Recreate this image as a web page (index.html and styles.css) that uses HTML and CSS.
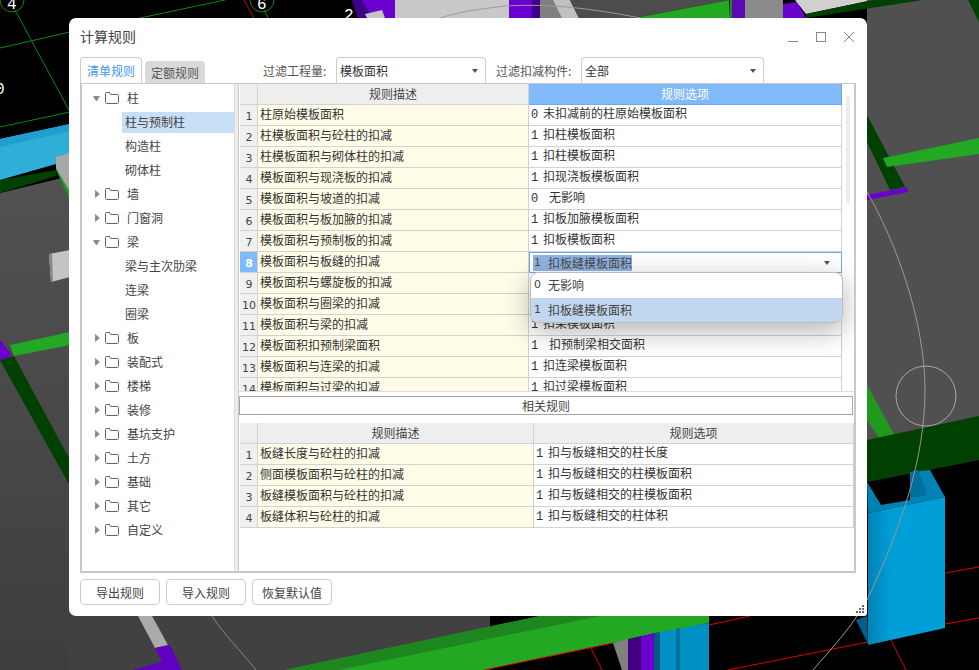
FILE: index.html
```html
<!DOCTYPE html>
<html lang="zh-CN">
<head>
<meta charset="utf-8">
<title>计算规则</title>
<link rel="stylesheet" href="styles.css">
</head>
<body>
<div class="desktop">
<svg class="scene" viewBox="0 0 979 670" width="979" height="670" xmlns="http://www.w3.org/2000/svg">
  <defs>
    <linearGradient id="floor" x1="0" y1="0" x2="0" y2="1"><stop offset="0" stop-color="#525252"/><stop offset="1" stop-color="#3e3e3e"/></linearGradient>
    <linearGradient id="col" x1="0" y1="0" x2="1" y2="0"><stop offset="0" stop-color="#0082b8"/><stop offset=".3" stop-color="#009fd8"/><stop offset="1" stop-color="#009fd8"/></linearGradient>
  </defs>
  <rect width="979" height="670" fill="#000"/>
  <polygon points="0,193 70,176 70,670 0,670" fill="url(#floor)"/>
  <rect x="70" y="600" width="420" height="70" fill="#414141"/>
  <polygon points="0,139 70,124 70,160 0,180" fill="#2fafd8"/>
  <polygon points="0,139 70,124 70,131 0,147" fill="#1f9fcf"/>
  <polygon points="0,180 56,170 56,176 0,193" fill="#004000"/>
  <polygon points="56,170 70,200 70,180 56,168" fill="#1f9a1f"/>
  <polygon points="56,157 70,153 70,192 56,168" fill="#a8a8a8"/>
  <polygon points="49,254 70,250 70,277 51,282" fill="#c4c4c4"/>
  <polygon points="49,254 52,254 53,281 51,282" fill="#888"/>
  <line x1="0" y1="48" x2="70" y2="32" stroke="#0c8a0c"/>
  <line x1="0" y1="127" x2="70" y2="112" stroke="#0c8a0c"/>
  <line x1="15" y1="10" x2="70" y2="112" stroke="#0c8a0c"/>
  <line x1="140" y1="18" x2="225" y2="0" stroke="#0c8a0c"/>
  <line x1="244" y1="0" x2="254" y2="18" stroke="#d00000"/>
  <line x1="268" y1="18" x2="264" y2="10" stroke="#0c8a0c"/>
  <circle cx="12" cy="0" r="12" fill="none" stroke="#0c8a0c"/>
  <circle cx="262" cy="0" r="12" fill="none" stroke="#0c8a0c"/>
  <text class="scene-num" x="7" y="9">4</text>
  <text class="scene-num" x="257" y="9">6</text>
  <text class="scene-num" x="344" y="20">2</text>
  <text class="scene-num" x="-5" y="94">0</text>

  <polygon points="352,0 365,0 395,0 395,18 365,18 358,18" fill="#6a00d0"/>
  <polygon points="352,0 362,0 372,18 358,18" fill="#40008a"/>
  <polygon points="365,14 382,10 385,18 367,18" fill="#c4c4c4"/>
  <rect x="395" y="0" width="114" height="18" fill="#c8c8c8"/>
  <rect x="509" y="0" width="23" height="18" fill="#6a00d0"/>
  <rect x="532" y="0" width="8" height="18" fill="#40008a"/>
  <rect x="540" y="0" width="30" height="18" fill="#808080"/>
  <polygon points="553,0 570,0 579,18 562,18" fill="#c0c0c0"/>
  <polygon points="570,0 729,0 635,18 579,18" fill="#4c4c4c"/>
  <polygon points="635,18 729,0 730,18" fill="#22a822"/>
  <path d="M440 18 C465 10 490 8 505 6 C540 4 580 6 640 18" fill="none" stroke="#9a9a9a"/>
  <rect x="730" y="0" width="2" height="18" fill="#1f8a1f"/>
  <rect x="732" y="0" width="13" height="18" fill="#5a0ab0"/>
  <rect x="745" y="0" width="38" height="18" fill="#8a8a8a"/>
  <polygon points="783,4 797,2 806,18 783,18" fill="#6a00cc"/>
  <polygon points="795,0 873,0 806,14" fill="#d0d0d0"/>
  <polygon points="867,0 979,0 979,500 867,500" fill="#505050"/>
  <polygon points="806,14 873,0 923,0 806,18" fill="#004000"/>
  <polygon points="968,0 979,0 979,22" fill="#004000"/>
  <polygon points="867,115 905,187 890,190 867,142" fill="#004000"/>
  <polygon points="883,158 979,138 979,154 887,167" fill="#22a822"/>
  <polygon points="867,195 907,187 908,192 867,200" fill="#6a00cc"/>
  <polygon points="867,385 896,438 881,441 867,420" fill="#1f9a1f"/>
  <polygon points="867,440 979,416 979,460 867,482" fill="#004000"/>
  <polygon points="867,482 979,460 979,670 867,670" fill="#000"/>
  <polygon points="867,482 881,505 910,500 910,472 930,470 945,497 868,513" fill="#0083b4"/>
  <polygon points="910,472 918,470 927,495 910,498" fill="#006f9c"/>
  <polygon points="868,513 945,497 945,628 868,645" fill="url(#col)"/>
  <polygon points="856,620 867,616 868,644" fill="#00608a"/>
  <line x1="945" y1="573" x2="979" y2="567" stroke="#e00000"/>
  <line x1="945" y1="624" x2="979" y2="618" stroke="#e00000"/>
  <line x1="728" y1="670" x2="868" y2="642" stroke="#e00000"/>
  <line x1="891" y1="640" x2="906" y2="670" stroke="#e00000"/>
  <line x1="709" y1="625" x2="750" y2="616" stroke="#e00000"/>

  <polygon points="0,340 12,355 0,362" fill="#6a00cc"/>
  <polygon points="10,345 70,332 70,345 14,356" fill="#22a822"/>
  <polygon points="0,360 14,356 70,460 70,486" fill="#004000"/>
  <polygon points="138,616 152,616 168,645 155,648" fill="#aaa"/>
  <polygon points="155,648 170,645 182,670 132,670 162,662" fill="#6000c0"/>
  <polygon points="490,616 709,616 709,670 490,670" fill="#000"/>
  <polygon points="540,616 709,616 709,623 613,643 484,670 285,670" fill="#22a822"/>
  <polygon points="540,616 600,616 339,670 285,670" fill="#1e861e"/>
  <line x1="484" y1="670" x2="613" y2="643" stroke="#e00000"/>
  <line x1="591" y1="648" x2="602" y2="670" stroke="#e00000"/>
  <polygon points="613,643 628,639 628,670 622,670" fill="#808080"/>
  <polygon points="628,639 641,636 641,670 628,670" fill="#400080"/>
  <polygon points="641,636 654,633 654,670 641,670" fill="#6a00cc"/>
  <polygon points="654,633 660,632 660,670 654,670" fill="#005a80"/>
  <polygon points="660,632 709,623 709,670 660,670" fill="#0090c4"/>
  <polygon points="676,629 680,628 680,670 676,670" fill="#006f9c"/>
  <path d="M867 192 C895 240 925 320 925 390 C925 460 900 530 867 600 C850 630 830 650 813 670" fill="none" stroke="#999"/>
  <path d="M212 616 C222 632 240 650 256 670" fill="none" stroke="#888"/>
  <circle cx="926" cy="396" r="30" fill="none" stroke="#aaa"/>
</svg>

<section class="dialog">
  <header class="titlebar">
    <h1 class="title">计算规则</h1>
    <div class="winctl">
      <svg width="12" height="12" viewBox="0 0 12 12"><path d="M1 10.5H11" stroke="#888" fill="none"/></svg>
      <svg width="12" height="12" viewBox="0 0 12 12"><rect x="1.5" y="1.5" width="9" height="9" stroke="#888" fill="none"/></svg>
      <svg width="12" height="12" viewBox="0 0 12 12"><path d="M1 1L11 11M11 1L1 11" stroke="#888" fill="none"/></svg>
    </div>
  </header>

  <div class="toolbar">
    <div class="tab tab-on">清单规则</div>
    <div class="tab tab-off">定额规则</div>
    <span class="flabel flabel-a">过滤工程量:</span>
    <div class="select select-a"><span>模板面积</span><i class="caret"></i></div>
    <span class="flabel flabel-b">过滤扣减构件:</span>
    <div class="select select-b"><span>全部</span><i class="caret"></i></div>
  </div>

  <div class="panel">
    <nav class="tree">
      <div class="node"><i class="tw tw-open"></i><svg class="folder" viewBox="0 0 14 12"><path d="M.5 10.5V1.5a1 1 0 0 1 1-1h3l1 2h7a1 1 0 0 1 1 1v7a1 1 0 0 1-1 1h-11a1 1 0 0 1-1-1z" fill="none" stroke="#5a6478"/></svg><span>柱</span></div>
      <div class="leaf leaf-on"><span>柱与预制柱</span></div>
      <div class="leaf"><span>构造柱</span></div>
      <div class="leaf"><span>砌体柱</span></div>
      <div class="node"><i class="tw"></i><svg class="folder" viewBox="0 0 14 12"><path d="M.5 10.5V1.5a1 1 0 0 1 1-1h3l1 2h7a1 1 0 0 1 1 1v7a1 1 0 0 1-1 1h-11a1 1 0 0 1-1-1z" fill="none" stroke="#5a6478"/></svg><span>墙</span></div>
      <div class="node"><i class="tw"></i><svg class="folder" viewBox="0 0 14 12"><path d="M.5 10.5V1.5a1 1 0 0 1 1-1h3l1 2h7a1 1 0 0 1 1 1v7a1 1 0 0 1-1 1h-11a1 1 0 0 1-1-1z" fill="none" stroke="#5a6478"/></svg><span>门窗洞</span></div>
      <div class="node"><i class="tw tw-open"></i><svg class="folder" viewBox="0 0 14 12"><path d="M.5 10.5V1.5a1 1 0 0 1 1-1h3l1 2h7a1 1 0 0 1 1 1v7a1 1 0 0 1-1 1h-11a1 1 0 0 1-1-1z" fill="none" stroke="#5a6478"/></svg><span>梁</span></div>
      <div class="leaf"><span>梁与主次肋梁</span></div>
      <div class="leaf"><span>连梁</span></div>
      <div class="leaf"><span>圈梁</span></div>
      <div class="node"><i class="tw"></i><svg class="folder" viewBox="0 0 14 12"><path d="M.5 10.5V1.5a1 1 0 0 1 1-1h3l1 2h7a1 1 0 0 1 1 1v7a1 1 0 0 1-1 1h-11a1 1 0 0 1-1-1z" fill="none" stroke="#5a6478"/></svg><span>板</span></div>
      <div class="node"><i class="tw"></i><svg class="folder" viewBox="0 0 14 12"><path d="M.5 10.5V1.5a1 1 0 0 1 1-1h3l1 2h7a1 1 0 0 1 1 1v7a1 1 0 0 1-1 1h-11a1 1 0 0 1-1-1z" fill="none" stroke="#5a6478"/></svg><span>装配式</span></div>
      <div class="node"><i class="tw"></i><svg class="folder" viewBox="0 0 14 12"><path d="M.5 10.5V1.5a1 1 0 0 1 1-1h3l1 2h7a1 1 0 0 1 1 1v7a1 1 0 0 1-1 1h-11a1 1 0 0 1-1-1z" fill="none" stroke="#5a6478"/></svg><span>楼梯</span></div>
      <div class="node"><i class="tw"></i><svg class="folder" viewBox="0 0 14 12"><path d="M.5 10.5V1.5a1 1 0 0 1 1-1h3l1 2h7a1 1 0 0 1 1 1v7a1 1 0 0 1-1 1h-11a1 1 0 0 1-1-1z" fill="none" stroke="#5a6478"/></svg><span>装修</span></div>
      <div class="node"><i class="tw"></i><svg class="folder" viewBox="0 0 14 12"><path d="M.5 10.5V1.5a1 1 0 0 1 1-1h3l1 2h7a1 1 0 0 1 1 1v7a1 1 0 0 1-1 1h-11a1 1 0 0 1-1-1z" fill="none" stroke="#5a6478"/></svg><span>基坑支护</span></div>
      <div class="node"><i class="tw"></i><svg class="folder" viewBox="0 0 14 12"><path d="M.5 10.5V1.5a1 1 0 0 1 1-1h3l1 2h7a1 1 0 0 1 1 1v7a1 1 0 0 1-1 1h-11a1 1 0 0 1-1-1z" fill="none" stroke="#5a6478"/></svg><span>土方</span></div>
      <div class="node"><i class="tw"></i><svg class="folder" viewBox="0 0 14 12"><path d="M.5 10.5V1.5a1 1 0 0 1 1-1h3l1 2h7a1 1 0 0 1 1 1v7a1 1 0 0 1-1 1h-11a1 1 0 0 1-1-1z" fill="none" stroke="#5a6478"/></svg><span>基础</span></div>
      <div class="node"><i class="tw"></i><svg class="folder" viewBox="0 0 14 12"><path d="M.5 10.5V1.5a1 1 0 0 1 1-1h3l1 2h7a1 1 0 0 1 1 1v7a1 1 0 0 1-1 1h-11a1 1 0 0 1-1-1z" fill="none" stroke="#5a6478"/></svg><span>其它</span></div>
      <div class="node"><i class="tw"></i><svg class="folder" viewBox="0 0 14 12"><path d="M.5 10.5V1.5a1 1 0 0 1 1-1h3l1 2h7a1 1 0 0 1 1 1v7a1 1 0 0 1-1 1h-11a1 1 0 0 1-1-1z" fill="none" stroke="#5a6478"/></svg><span>自定义</span></div>
    </nav>
    <div class="splitter"></div>
    <div class="right">
      <div class="upper">
        <table class="grid grid-a">
          <colgroup><col class="c-n"><col class="c-da"><col class="c-oa"></colgroup>
          <thead><tr><th></th><th>规则描述</th><th class="th-on">规则选项</th></tr></thead>
          <tbody>
            <tr><td class="n">1</td><td class="d">柱原始模板面积</td><td class="o"><b>0</b>未扣减前的柱原始模板面积</td></tr>
            <tr><td class="n">2</td><td class="d">柱模板面积与砼柱的扣减</td><td class="o"><b>1</b>扣柱模板面积</td></tr>
            <tr><td class="n">3</td><td class="d">柱模板面积与砌体柱的扣减</td><td class="o"><b>1</b>扣柱模板面积</td></tr>
            <tr><td class="n">4</td><td class="d">模板面积与现浇板的扣减</td><td class="o"><b>1</b>扣现浇板模板面积</td></tr>
            <tr><td class="n">5</td><td class="d">模板面积与坡道的扣减</td><td class="o"><b class="wide">0</b>无影响</td></tr>
            <tr><td class="n">6</td><td class="d">模板面积与板加腋的扣减</td><td class="o"><b>1</b>扣板加腋模板面积</td></tr>
            <tr><td class="n">7</td><td class="d">模板面积与预制板的扣减</td><td class="o"><b>1</b>扣板模板面积</td></tr>
            <tr><td class="n n-on">8</td><td class="d">模板面积与板缝的扣减</td><td class="o-edit"><div class="edit"><span class="hl"><span class="hn">1</span>扣板缝模板面积</span><i class="caret"></i></div></td></tr>
            <tr><td class="n">9</td><td class="d">模板面积与螺旋板的扣减</td><td class="o"></td></tr>
            <tr><td class="n">10</td><td class="d">模板面积与圈梁的扣减</td><td class="o"></td></tr>
            <tr><td class="n">11</td><td class="d">模板面积与梁的扣减</td><td class="o"><b>1</b>扣梁模板面积</td></tr>
            <tr><td class="n">12</td><td class="d">模板面积扣预制梁面积</td><td class="o"><b class="wide">1</b>扣预制梁相交面积</td></tr>
            <tr><td class="n">13</td><td class="d">模板面积与连梁的扣减</td><td class="o"><b>1</b>扣连梁模板面积</td></tr>
            <tr><td class="n">14</td><td class="d">模板面积与过梁的扣减</td><td class="o"><b>1</b>扣过梁模板面积</td></tr>
          </tbody>
        </table>
        <div class="vscroll"></div>
        <ul class="dropdown">
          <li><span class="dn">0</span>无影响</li>
          <li class="li-on"><span class="dn">1</span>扣板缝模板面积</li>
        </ul>
      </div>
      <div class="related">相关规则</div>
      <table class="grid grid-b">
        <colgroup><col class="c-n"><col class="c-db"><col class="c-ob"></colgroup>
        <thead><tr><th></th><th>规则描述</th><th>规则选项</th></tr></thead>
        <tbody>
          <tr><td class="n">1</td><td class="d">板缝长度与砼柱的扣减</td><td class="o"><b>1</b>扣与板缝相交的柱长度</td></tr>
          <tr><td class="n">2</td><td class="d">侧面模板面积与砼柱的扣减</td><td class="o"><b>1</b>扣与板缝相交的柱模板面积</td></tr>
          <tr><td class="n">3</td><td class="d">板缝模板面积与砼柱的扣减</td><td class="o"><b>1</b>扣与板缝相交的柱模板面积</td></tr>
          <tr><td class="n">4</td><td class="d">板缝体积与砼柱的扣减</td><td class="o"><b>1</b>扣与板缝相交的柱体积</td></tr>
        </tbody>
      </table>
    </div>
  </div>

  <footer class="footer">
    <button class="btn">导出规则</button>
    <button class="btn">导入规则</button>
    <button class="btn">恢复默认值</button>
  </footer>
  <svg class="grip" width="9" height="9" viewBox="0 0 9 9"><path d="M6 0h2v2H6zM3 3h2v2H3zM6 3h2v2H6zM0 6h2v2H0zM3 6h2v2H3zM6 6h2v2H6z" fill="#666"/></svg>
</section>
</div>
</body>
</html>
```
FILE: styles.css
```css
* { box-sizing: border-box; }
html, body { margin: 0; padding: 0; }
body { font-family: "Noto Sans CJK SC", "Liberation Sans", sans-serif; font-size: 12px; color: #333; background: #000; }
.desktop { position: relative; width: 979px; height: 670px; overflow: hidden; }
.scene { position: absolute; left: 0; top: 0; display: block; }
.scene-num { fill: #fff; font: 16px "Liberation Mono", monospace; }

.dialog { position: absolute; left: 69px; top: 18px; width: 798px; height: 598px; background: #fff; border-radius: 7px 7px 3px 7px; padding: 0 11px; display: flex; flex-direction: column; }
.titlebar { height: 39px; flex: none; display: flex; align-items: center; justify-content: space-between; }
.title { margin: 0 0 2px; font-size: 14px; font-weight: 400; color: #444; line-height: 37px; }
.winctl { display: flex; gap: 16px; margin-right: 1px; margin-top: -2px; }

.toolbar { height: 26px; flex: none; display: flex; align-items: flex-end; }
.tab { display: flex; align-items: center; justify-content: center; border-radius: 4px 4px 0 0; }
.tab-on { width: 62px; height: 26px; background: #fff; color: #3f96ee; border: 1px solid #ccc; border-bottom: 0; }
.tab-off { width: 60px; height: 22px; margin-left: 3px; background: #d9d9d9; color: #555; }
.flabel { height: 26px; line-height: 27px; color: #555; white-space: nowrap; }
.flabel-a { margin-left: 58px; width: 73px; }
.flabel-b { margin-left: 10px; width: 85px; }
.select { height: 26px; display: flex; align-items: center; justify-content: space-between; background: #fff; border: 1px solid #ccc; border-bottom: 0; border-radius: 4px 4px 0 0; padding: 0 7px 0 3px; color: #333; }
.select-a { width: 150px; }
.select-b { width: 183px; }
.caret { display: block; width: 0; height: 0; border-left: 3.5px solid transparent; border-right: 3.5px solid transparent; border-top: 4px solid #4a5568; }

.panel { width: 776px; height: 490px; flex: none; display: flex; border: 2px solid #c8c8c8; border-top-width: 1px; }
.tree { width: 152px; flex: none; padding-top: 2px; background: #fff; }
.node { height: 24px; display: flex; align-items: center; padding-left: 11px; color: #444; }
.node span { padding-bottom: 2px; }
.tw { display: block; width: 7px; height: 0; border-top: 4px solid transparent; border-bottom: 4px solid transparent; border-left: 5px solid #8a8a8a; margin-left: 2px; margin-right: -2px; }
.tw-open { border-top: 5px solid #8a8a8a; border-bottom: 0; border-left: 3.5px solid transparent; border-right: 3.5px solid transparent; width: 7px; margin-left: 0; margin-right: 0; }
.folder { display: block; width: 14px; height: 12px; margin-left: 5px; margin-right: 8px; }
.leaf { height: 24px; display: flex; align-items: center; margin-left: 40px; color: #444; }
.leaf span { display: flex; align-items: center; width: 100%; height: 21px; padding: 0 0 2px 3px; }
.leaf-on span { background: #c8dff8; }
.splitter { width: 5px; flex: none; background: #ececec; border-right: 1px solid #ccc; border-left: 1px solid #ddd; }

.right { width: 615px; flex: none; display: flex; flex-direction: column; background: #fff; }
.upper { position: relative; height: 308px; flex: none; overflow: hidden; padding-left: 1px; border-bottom: 1px solid #ddd; }
.grid { border-collapse: separate; border-spacing: 0; table-layout: fixed; }
.grid-a { width: 602px; }
.grid-b { width: 614px; margin: 8px 0 0 1px; }
.c-n { width: 18px; }
.c-da { width: 271px; }
.c-oa { width: 313px; }
.c-db { width: 276px; }
.c-ob { width: 320px; }
.grid th, .grid td { height: 21px; padding: 0; line-height: 14px; border-right: 1px solid #d2d2d2; border-bottom: 1px solid #d2d2d2; white-space: nowrap; overflow: hidden; }
.grid th { background: #eeeeee; font-weight: 400; color: #444; text-align: center; }
.grid .th-on { background: #80baf8; color: #fff; border-color: #70aaea; }
.grid .n { background: #f0f0f0; font-family: "DejaVu Sans", sans-serif; font-size: 11px; text-align: center; padding: 3px 0 0 1px; color: #444; }
.grid .n-on { background: #80baf8; color: #fff; font-weight: 700; }
.grid .d { background: #fffde8; padding: 0 0 3px 2px; color: #333; }
.grid .o { background: #fff; padding: 0 0 3px 2px; color: #333; }
.o b { display: inline-block; width: 12px; line-height: 12px; font-family: "Liberation Mono", monospace; font-weight: 400; font-size: 12px; }
.o b.wide { width: 18px; }
.grid .o-edit { padding: 0; border: 1px solid #72a8e0; background: #fff; }
.edit { height: 19px; display: flex; align-items: center; justify-content: space-between; padding: 0 11px 0 3px; }
.hl { display: flex; background: #8fb4e3; color: #4a4a4a; height: 16px; line-height: 15px; }
.hn { width: 15px; font-family: "DejaVu Sans", sans-serif; font-size: 11px; padding-left: 1px; }
.vscroll { position: absolute; left: 607px; top: 12px; width: 4px; height: 108px; background: #ececec; border-radius: 2px; }
.dropdown { position: absolute; left: 291px; top: 188px; width: 313px; height: 51px; margin: 0; padding: 0; list-style: none; background: #fff; border: 1px solid #bcbcbc; border-radius: 8px; overflow: hidden; box-shadow: 0 8px 28px rgba(0,0,0,.3); }
.dropdown li { height: 25px; display: flex; align-items: center; padding: 0 0 3px 3px; color: #444; }
.dropdown .li-on { background: #c0d7ef; }
.dn { width: 14px; font-family: "DejaVu Sans", sans-serif; font-size: 11px; }
.related { height: 19px; margin: 4px 1px 0 0; flex: none; border: 1px solid #a4a4a4; text-align: center; line-height: 18px; color: #444; background: #fff; }

.footer { display: flex; gap: 6px; padding-top: 6px; flex: none; }
.btn { width: 80px; height: 26px; padding: 0; background: #fff; border: 1px solid #ccc; border-radius: 4px; font: inherit; color: #444; }
.grip { position: absolute; right: 2px; bottom: 2px; }
```
